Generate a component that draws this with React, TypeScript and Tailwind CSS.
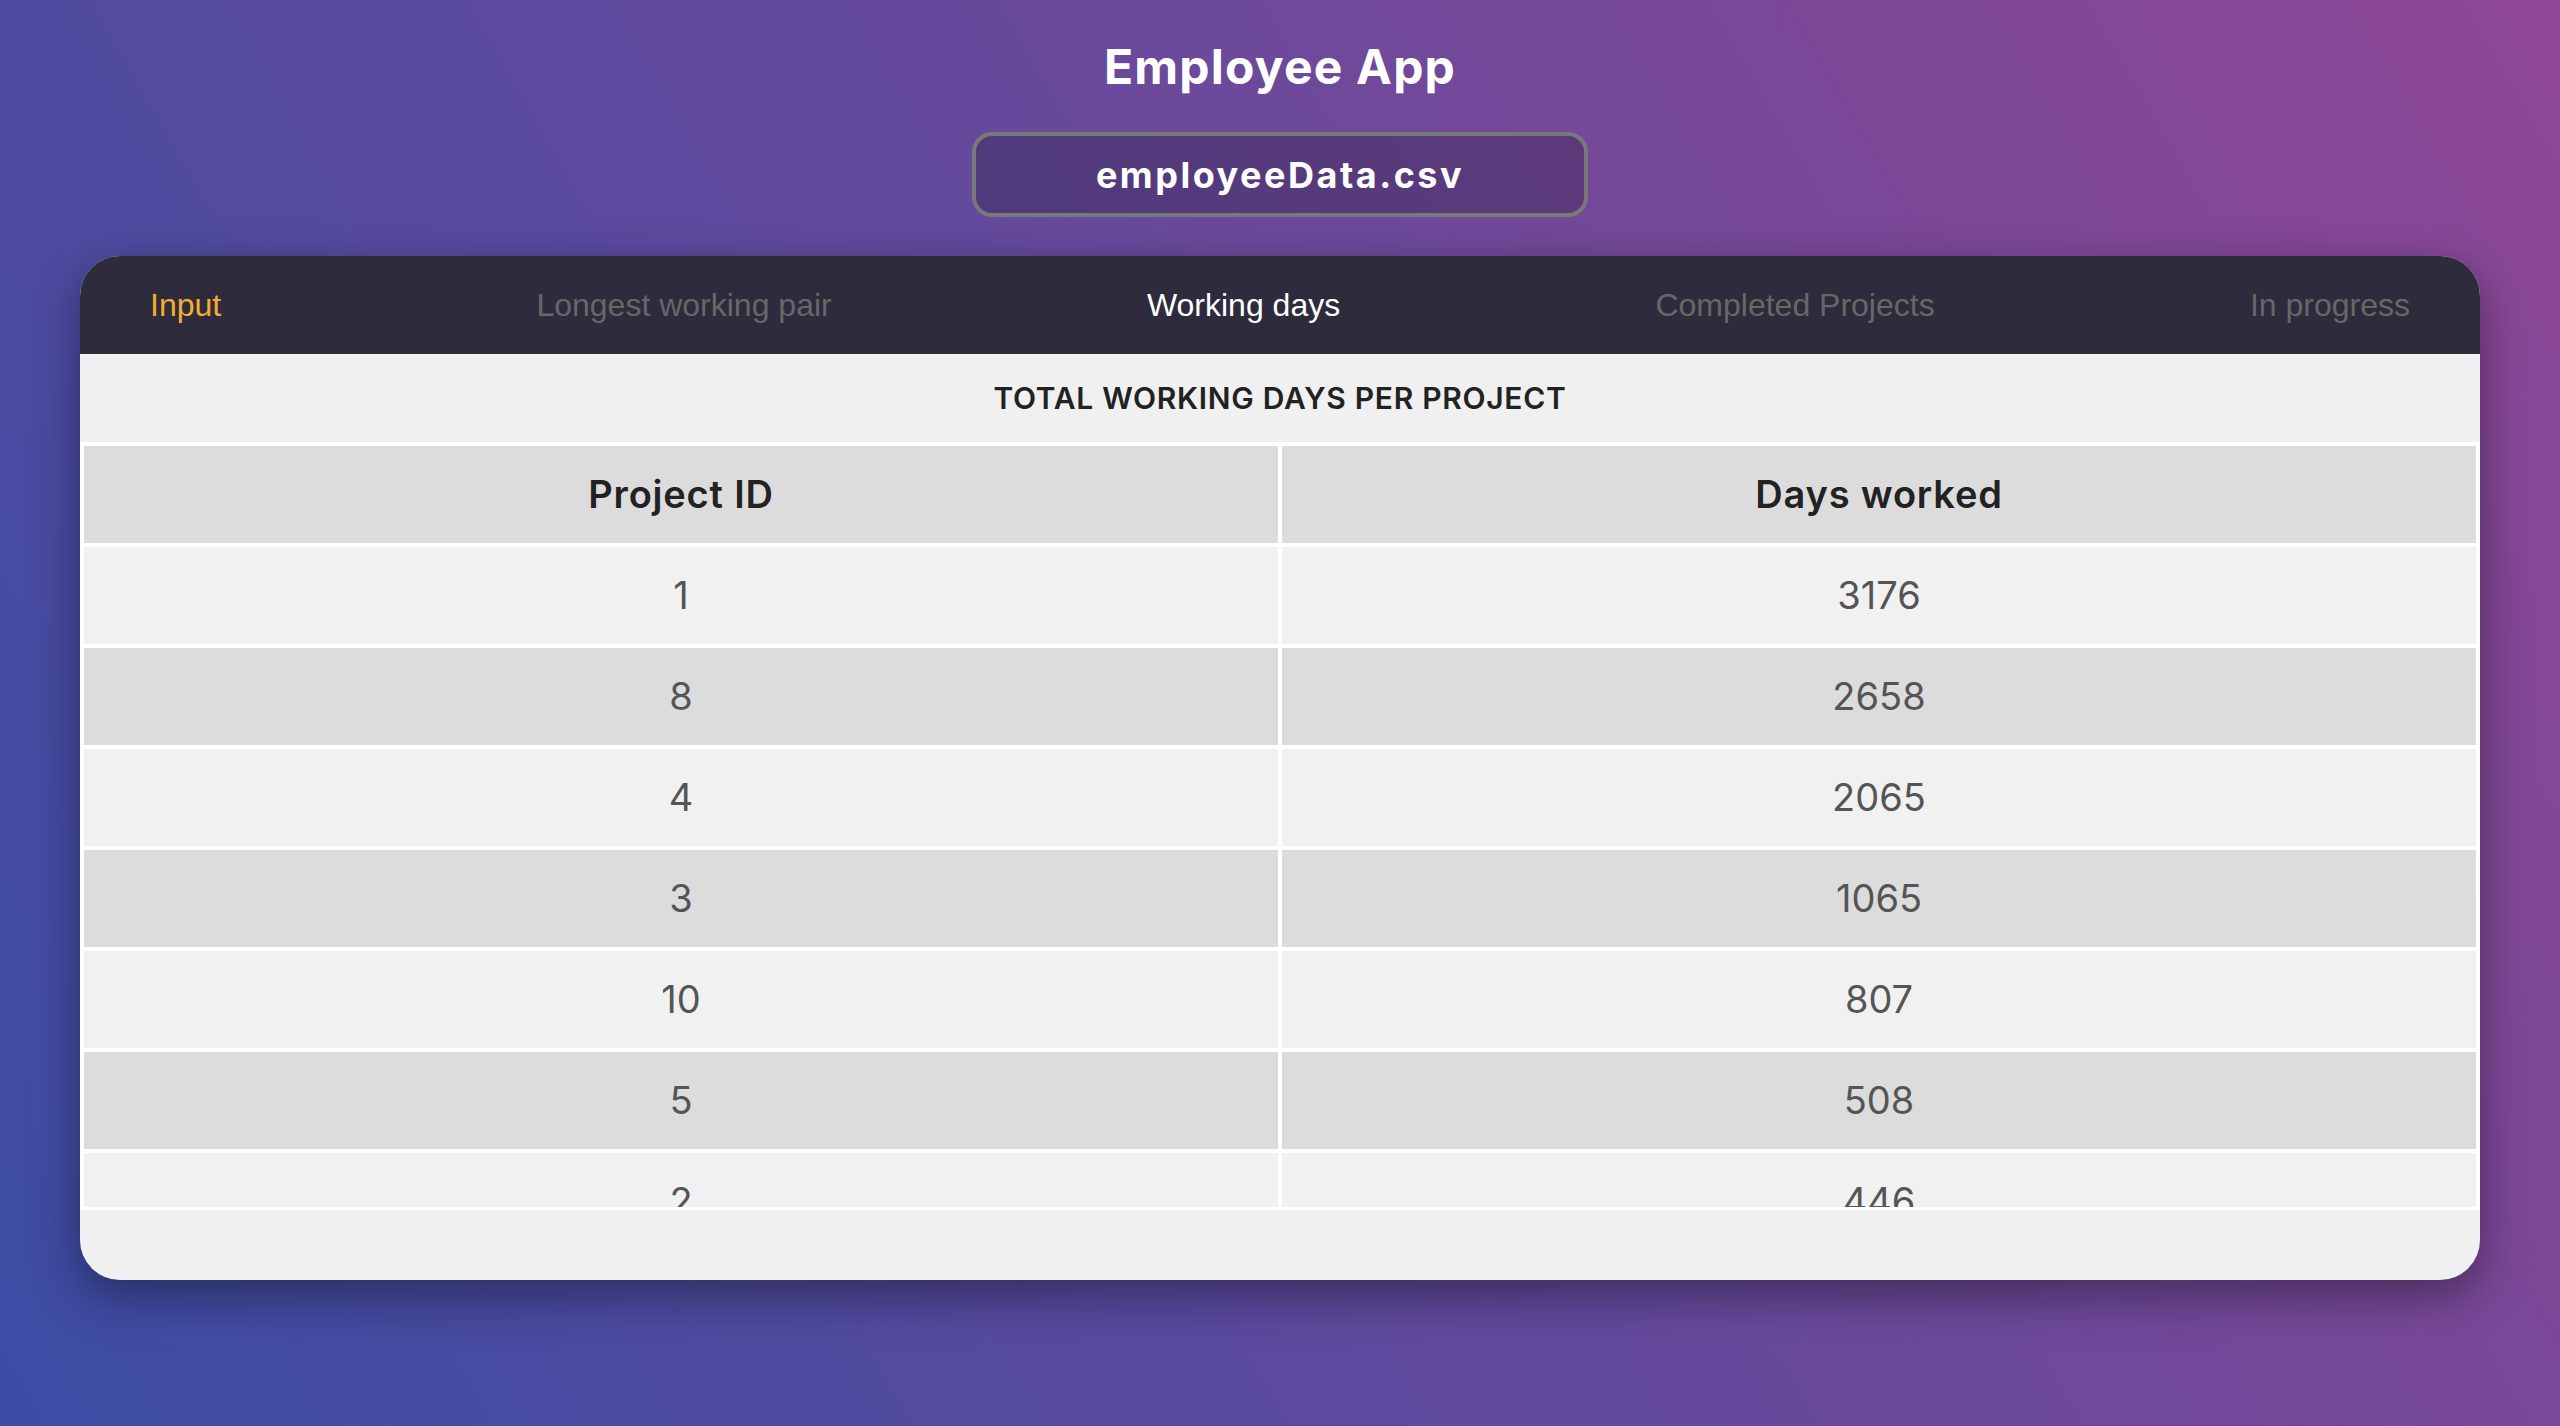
const tabs = [
  { label: 'Input', color: 'text-[#f5ad2e]' },
  { label: 'Longest working pair', color: 'text-[#676767]' },
  { label: 'Working days', color: 'text-white' },
  { label: 'Completed Projects', color: 'text-[#676767]' },
  { label: 'In progress', color: 'text-[#676767]' },
];

const rows: [number, number][] = [
  [1, 3176],
  [8, 2658],
  [4, 2065],
  [3, 1065],
  [10, 807],
  [5, 508],
  [2, 446],
  [6, 312],
];

export default function App() {
  return (
    <div className="flex min-h-[1426px] w-full flex-col items-center bg-[linear-gradient(60deg,#3b4ca4,#8e4795)] pt-[43px] font-['Inter',sans-serif]">
      <h1 className="text-[48px] leading-none font-bold tracking-[1.2px] text-white">Employee App</h1>

      <div className="mt-[41px] flex h-[85px] w-[616px] items-center justify-center rounded-[20px] border-4 border-[#787878] bg-black/20">
        <span className="text-[36px] leading-none font-bold tracking-[2.5px] text-white">employeeData.csv</span>
      </div>

      <div className="mt-[39px] flex h-[1024px] w-[2400px] flex-col overflow-hidden rounded-[40px] bg-[#f0f0f0] shadow-[0_16px_48px_rgba(0,0,0,0.4)]">
        {/* Tabs */}
        <nav className="flex h-[98px] shrink-0 items-center justify-between bg-[#2e2b3d] px-[70px] font-['Liberation_Sans',Arial,sans-serif] text-[32px]">
          {tabs.map((t) => (
            <span key={t.label} className={t.color}>
              {t.label}
            </span>
          ))}
        </nav>

        <div className="flex h-[88px] shrink-0 items-center justify-center">
          <h2 className="text-[30px] leading-none font-semibold tracking-[0.7px] text-[#222] uppercase">
            Total working days per project
          </h2>
        </div>

        {/* Table viewport */}
        <div className="h-[768px] shrink-0 overflow-hidden border-b-[3px] border-white bg-white">
          <div className="grid grid-cols-2 gap-[4px] p-[4px]">
            <div className="flex h-[97px] items-center justify-center bg-[#dcdcdc] text-[38px] font-semibold tracking-[0.8px] text-[#222]">
              Project ID
            </div>
            <div className="flex h-[97px] items-center justify-center bg-[#dcdcdc] text-[38px] font-semibold tracking-[0.8px] text-[#222]">
              Days worked
            </div>
            {rows.map(([id, days], i) => {
              const bg = i % 2 === 0 ? 'bg-[#f1f1f1]' : 'bg-[#dcdcdc]';
              return [
                <div key={`id-${id}`} className={`flex h-[97px] items-center justify-center ${bg} text-[38px] text-[#555]`}>
                  {id}
                </div>,
                <div key={`d-${id}`} className={`flex h-[97px] items-center justify-center ${bg} text-[38px] text-[#555]`}>
                  {days}
                </div>,
              ];
            })}
          </div>
        </div>
      </div>
    </div>
  );
}
